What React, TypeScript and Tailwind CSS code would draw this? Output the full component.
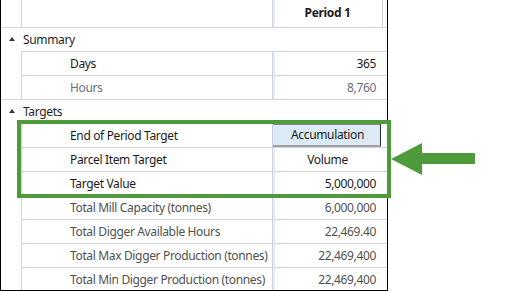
import React from "react";

type Row = {
  label: string;
  value: string;
  tone?: "dark" | "muted" | "grey";
  align?: "right" | "center";
  combo?: boolean;
};

const summaryRows: Row[] = [
  { label: "Days", value: "365", tone: "dark" },
  { label: "Hours", value: "8,760", tone: "muted" },
];

const targetRows: Row[] = [
  { label: "End of Period Target", value: "Accumulation", tone: "dark", combo: true },
  { label: "Parcel Item Target", value: "Volume", tone: "dark", align: "center" },
  { label: "Target Value", value: "5,000,000", tone: "dark" },
  { label: "Total Mill Capacity (tonnes)", value: "6,000,000", tone: "grey" },
  { label: "Total Digger Available Hours", value: "22,469.40", tone: "grey" },
  { label: "Total Max Digger Production (tonnes)", value: "22,469,400", tone: "grey" },
  { label: "Total Min Digger Production (tonnes)", value: "22,469,400", tone: "grey" },
];

const toneClass = {
  dark: "text-[#1b1b1b]",
  muted: "text-[#6c6c7c]",
  grey: "text-[#505050]",
};

const Caret = () => (
  <svg width="6" height="5" viewBox="0 0 6 5" className="ml-[8px]">
    <polygon points="3,0 6,4 0,4" fill="#3a3a3a" />
  </svg>
);

const GroupRow = ({ title }: { title: string }) => (
  <div className="flex h-[23px] items-center text-[#1e1e1e]">
    <div className="flex w-[21px] items-center">
      <Caret />
    </div>
    <span className="pl-[1px]">{title}</span>
  </div>
);

const ChildRow = ({ row }: { row: Row }) => {
  const tone = toneClass[row.tone ?? "dark"];
  return (
    <div className="flex h-[24px]">
      <div className="w-[20px] shrink-0" />
      <div className="flex flex-1 border-l border-t border-[#d3d3de]">
        <div className={`flex w-[250px] shrink-0 items-center whitespace-nowrap pl-[48px] ${tone}`}>
          {row.label}
        </div>
        <div className="flex w-[110px] shrink-0 border-l border-[#cfd0dc] shadow-[inset_2px_0_0_#e6eef7]">
          {row.combo ? (
            <div className="flex h-full w-[108px] items-center justify-center border-t border-t-[#8a8a8a] border-r border-r-[#2a2a2a] border-b-2 border-b-[#a0a0a0] bg-[#dbeaf4] pl-[2px] text-[#1b1b1b]">
              {row.value}
            </div>
          ) : (
            <div
              className={`flex flex-1 items-center pr-[6px] ${tone} ${
                row.align === "center" ? "justify-center pl-[6px]" : "justify-end"
              }`}
            >
              {row.value}
            </div>
          )}
        </div>
      </div>
    </div>
  );
};

export default function App() {
  return (
    <div className="relative h-[292px] w-[512px] overflow-hidden bg-white font-['Noto_Sans',sans-serif] text-[12px] leading-none tracking-[-0.35px]">
      <div className="h-[291px] w-[388px] overflow-hidden border-x border-b border-black">
        {/* column header */}
        <div className="flex h-[28px] border-b border-[#d3d3de]">
          <div className="w-[20px] shrink-0" />
          <div className="w-[251px] shrink-0 border-l border-[#d3d3de]" />
          <div className="flex w-[111px] shrink-0 items-center justify-center border-x border-[#cfd0dc] pb-[1px] font-bold text-[#1b1b1b] shadow-[inset_2px_0_0_#e6eef7]">
            Period 1
          </div>
        </div>

        <div className="border-b border-[#d3d3de]">
          <GroupRow title="Summary" />
          {summaryRows.map((r) => (
            <ChildRow key={r.label} row={r} />
          ))}
        </div>

        <GroupRow title="Targets" />
        {targetRows.map((r) => (
          <ChildRow key={r.label} row={r} />
        ))}
      </div>

      {/* callout highlight */}
      <div className="absolute left-[17px] top-[120px] h-[78px] w-[374px] border-4 border-[#4f9a3b]" />
      <svg
        className="absolute left-[390px] top-[142px]"
        width="86"
        height="34"
        viewBox="0 0 86 34"
      >
        <polygon points="1,17 32,1 32,11 85,11 85,22 32,22 32,33" fill="#4f9a3b" />
      </svg>
    </div>
  );
}
